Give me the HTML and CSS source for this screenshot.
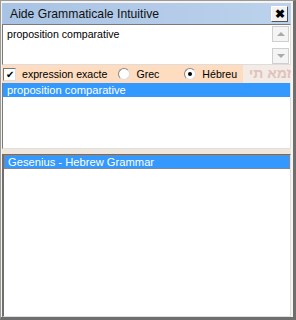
FILE: index.html
```html
<!DOCTYPE html>
<html lang="fr">
<head>
  <meta charset="UTF-8" />
  <title>Aide Grammaticale Intuitive</title>
  <link rel="stylesheet" href="styles.css">
</head>
<body>
  <div class="win">
    <div class="title-bar">
      <span class="title">Aide Grammaticale Intuitive</span>
      <button class="close-btn">&#x2716;</button>
    </div>
    <div class="query-box">
      <div class="query-text">proposition comparative</div>
      <div class="scroll">
        <div class="arrow up"></div>
        <div class="arrow down"></div>
      </div>
    </div>
    <div class="opt-row">
      <div class="opts">
        <span class="check">&#x2714;</span>
        <span class="opt-label exact">expression exacte</span>
        <span class="radio"></span>
        <span class="opt-label grec">Grec</span>
        <span class="radio on"></span>
        <span class="opt-label">Hébreu</span>
      </div>
      <div class="backdrop">זמא תי</div>
    </div>
    <div class="list list-top">
      <div class="item sel">proposition comparative</div>
    </div>
    <div class="splitter"></div>
    <div class="list list-bottom">
      <div class="item sel focus">Gesenius - Hebrew Grammar</div>
    </div>
  </div>
</body>
</html>
```

FILE: styles.css
```css
:root {
  --sel: #3399ff;
  --peach: #fddcbf;
}
html, body { margin: 0; padding: 0; }
body {
  font-family: 'Liberation Sans', Arial, sans-serif;
  font-size: 11px;
  background: #fff;
}
.win {
  width: 296px; height: 320px;
  box-sizing: border-box;
  background: #f7f3ee;
  border: 1px solid #9a9a9a;
  border-right: 3px solid #6f6f6f;
  border-bottom: 3px solid #6f6f6f;
  padding: 2px 2px 0 1px;
  display: flex; flex-direction: column;
}
.title-bar {
  height: 21px;
  background: linear-gradient(to right, #a8c3e4, #bcd2ec);
  display: flex; align-items: center; justify-content: space-between;
  padding: 0 3px 0 8px;
  flex: none;
}
.title { font-size: 12.2px; color: #111; }
.close-btn {
  width: 17px; height: 16px;
  padding: 0; margin: 0;
  background: #f2f2f2;
  border: 1px solid #fff;
  border-right-color: #555; border-bottom-color: #555;
  font-size: 12px; line-height: 14px; font-weight: bold;
  color: #000;
}
.query-box {
  height: 39px;
  flex: none;
  background: #fff;
  border: 1px solid #7a7a7a;
  border-right-color: #ddd; border-bottom-color: #ddd;
  display: flex; justify-content: space-between;
}
.query-text { padding: 3px 4px; font-size: 10.6px; }
.scroll {
  width: 17px;
  padding: 1px 1px 0 0;
  display: flex; flex-direction: column; justify-content: space-between;
}
.arrow {
  height: 16px;
  background: #f4f4f4;
  border: 1px solid #cfcfcf;
  box-sizing: border-box;
  display: flex; align-items: center; justify-content: center;
}
.arrow::after { content: ''; border: 4px solid transparent; }
.arrow.up::after { border-bottom-color: #aaa; border-top: 0; }
.arrow.down::after { border-top-color: #aaa; border-bottom: 0; }
.opt-row {
  height: 18px; flex: none;
  display: flex;
  background: #f2ebe6;
}
.opts {
  width: 241px;
  background: var(--peach);
  display: flex; align-items: center;
  padding-left: 1px;
  white-space: nowrap;
  box-sizing: border-box;
}
.backdrop {
  flex: 1;
  color: #d6a8a0;
  font-weight: bold; font-size: 14px;
  overflow: hidden; white-space: nowrap;
  padding-left: 6px; opacity: 0.6;
}
.check {
  width: 11px; height: 11px;
  background: #fff;
  border: 1px solid #777;
  border-right-color: #ddd; border-bottom-color: #ddd;
  font-size: 10px; line-height: 11px; text-align: center;
  margin-right: 6px;
}
.radio {
  width: 10px; height: 10px;
  flex: none;
  border-radius: 50%;
  background: #fff;
  border: 1px solid #888;
  border-right-color: #ddd; border-bottom-color: #ddd;
  margin: 0 6px 0 11px;
  position: relative;
}
.radio.on::after {
  content: '';
  position: absolute; left: 3px; top: 3px;
  width: 4px; height: 4px; border-radius: 50%;
  background: #000;
}
.opt-label { font-size: 10.6px; color: #000; }
.opt-label.grec { margin-right: 14px; }
.list {
  background: #fff;
  border: 1px solid #7a7a7a;
  border-right-color: #e0e0e0; border-bottom-color: #e0e0e0;
  box-sizing: border-box;
}
.list-top { height: 66px; flex: none; border-top: 0; }
.splitter { height: 5px; flex: none; background: #efe6dc; }
.list-bottom { flex: 1; border-left: 2px solid #6f6f6f; border-top: 1px solid #6f6f6f; }
.item {
  height: 14px; line-height: 14px;
  padding: 0 4px;
  font-size: 11.2px;
}
.item.sel { background: var(--sel); color: #fff; }
.item.focus { outline: 1px dotted #c97a3a; outline-offset: -1px; }
```
